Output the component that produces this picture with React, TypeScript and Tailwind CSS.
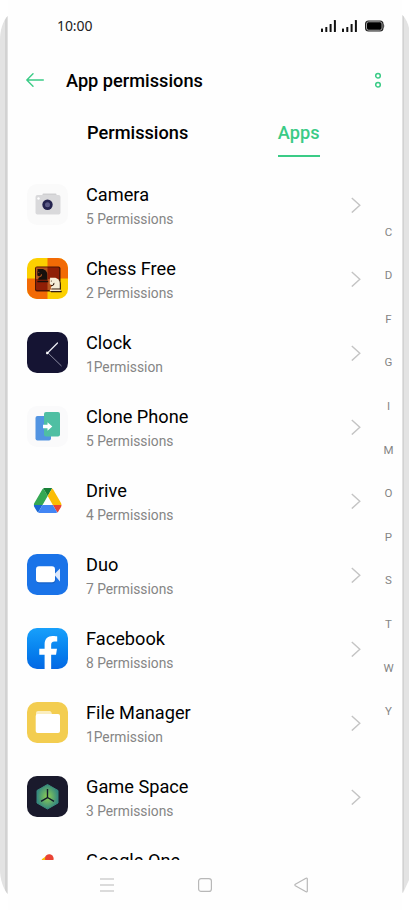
import React from "react";
import { FaChessKnight, FaFacebookF } from "react-icons/fa";

const CameraIcon = () => (
  <svg viewBox="0 0 41 41" className="size-full bg-[#fafafa]">
    <rect x="15.5" y="9.5" width="14" height="5" rx="1" fill="#cfcfd1" />
    <rect x="8.5" y="11" width="25" height="19.5" rx="2" fill="#d9d9db" />
    <circle cx="11.5" cy="14.5" r="1.2" fill="#fff" />
    <circle cx="20.5" cy="20.8" r="5.2" fill="#24234f" />
    <circle cx="20.5" cy="20.8" r="2.5" fill="#5b5a86" />
  </svg>
);

const ChessIcon = () => (
  <svg viewBox="0 0 41 41" className="size-full bg-[#fcd000]">
    <path d="M20.5 0H41v20.5H20.5zM0 20.5h20.5V41H0z" fill="#f26a05" />
    <rect x="8" y="8.5" width="25.5" height="25" rx="2" fill="#4a1506" />
    <rect x="9" y="9.5" width="23" height="22.5" rx="1" fill="#8f1f06" />
    <path d="M9 9.5h11.5v11.5H9z" fill="#b5571f" />
    <path d="M20.5 21H32v11H20.5z" fill="#b5571f" />
    <FaChessKnight x="8.5" y="10" size={14.5} fill="#17100c" />
    <FaChessKnight x="22" y="20" size={14.5} fill="#2b1408" />
    <FaChessKnight x="21" y="18.8" size={14.5} fill="#f6edd8" />
  </svg>
);

const ClockIcon = () => (
  <svg viewBox="0 0 41 41" className="size-full bg-[#151433]">
    <path d="M30.5 11 20 21.5" stroke="#e8e8f0" strokeWidth="1.3" strokeLinecap="round" />
    <path d="M19.5 19.5 34.5 34" stroke="#a9a9bd" strokeWidth="0.8" />
    <circle cx="20.3" cy="21" r="1.2" fill="#fff" />
  </svg>
);

const ClonePhoneIcon = () => (
  <svg viewBox="0 0 41 41" className="size-full bg-[#fafafb]">
    <rect x="8.5" y="10" width="15.5" height="24.5" rx="2" fill="#5294e2" />
    <rect x="17" y="6" width="16" height="24.5" rx="2" fill="#4fbfa3" />
    <path d="M16 18.8h4.5v-2.6l4.8 4.3-4.8 4.3v-2.6H16z" fill="#fff" />
  </svg>
);

const DriveIcon = () => (
  <svg viewBox="0 0 41 41" className="size-full">
    <svg x="6.7" y="8" width="28" height="25" viewBox="0 0 87.3 78">
      <path d="m6.6 66.85 3.85 6.65c.8 1.4 1.95 2.5 3.3 3.3l13.75-23.8H0c0 1.55.4 3.1 1.2 4.5z" fill="#1967d2" />
      <path d="M43.65 25 29.9 1.2c-1.35.8-2.5 1.9-3.3 3.3l-25.4 44A9.06 9.06 0 0 0 0 53h27.5z" fill="#34a853" />
      <path d="M73.55 76.8c1.35-.8 2.5-1.9 3.3-3.3l9.25-16c.8-1.4 1.2-2.95 1.2-4.5H59.8z" fill="#ea4335" />
      <path d="M43.65 25 57.4 1.2C56.05.4 54.5 0 52.9 0H34.4c-1.6 0-3.15.45-4.5 1.2z" fill="#188038" />
      <path d="M59.8 53H27.5L13.75 76.8c1.35.8 2.9 1.2 4.5 1.2h50.8c1.6 0 3.15-.45 4.5-1.2z" fill="#4285f4" />
      <path d="m73.4 26.5-12.7-22c-.8-1.4-1.95-2.5-3.3-3.3L43.65 25 59.8 53h27.45c0-1.55-.4-3.1-1.2-4.5z" fill="#fbbc04" />
    </svg>
  </svg>
);

const DuoIcon = () => (
  <svg viewBox="0 0 41 41" className="size-full bg-[#1a73e8]">
    <rect x="9.5" y="13.5" width="19" height="16" rx="3" fill="#1557b0" opacity="0.6" />
    <path d="m27 20.5 6-6v13z" fill="#dbe7fb" />
    <rect x="9" y="12.3" width="19" height="16" rx="3" fill="#fff" />
  </svg>
);

const FacebookIcon = () => (
  <svg viewBox="0 0 41 41" className="size-full bg-linear-to-b from-[#18a0fb] to-[#0568e4]">
    <FaFacebookF x="4.5" y="8" size={33.5} fill="#fff" />
  </svg>
);

const FileManagerIcon = () => (
  <svg viewBox="0 0 41 41" className="size-full bg-[#f3cd50]">
    <path d="M9 17v-6a2 2 0 0 1 2-2h11.5a2 2 0 0 1 2 1.5l1 4z" fill="#fbeebf" />
    <rect x="8.7" y="12" width="24.3" height="19" rx="2" fill="#fff" />
  </svg>
);

const GameSpaceIcon = () => (
  <svg viewBox="0 0 41 41" className="size-full bg-[#1a1a2c]">
    <defs>
      <radialGradient id="hex">
        <stop offset="0" stopColor="#8fd052" />
        <stop offset="1" stopColor="#36897f" />
      </radialGradient>
    </defs>
    <path d="m20.5 8.5 10.5 6v12.5l-10.5 6-10.5-6V14.500z" fill="url(#hex)" stroke="url(#hex)" strokeLinejoin="round" />
    <path d="M20.5 13v8.5L14 25.3M20.5 21.5l6.5 3.8" fill="none" stroke="#12182a" strokeWidth="1.4" />
  </svg>
);

const GoogleOneIcon = () => (
  <svg viewBox="0 0 41 41" className="size-full" fill="none" strokeWidth="8" strokeLinecap="round">
    <path d="M22 9v22" stroke="#4285f4" />
    <path d="m18.5 11.5 3.500-2.500" stroke="#fbbc04" />
    <circle cx="22.3" cy="8.5" r="4.3" fill="#ea4335" />
  </svg>
);

const apps = [
  { name: "Camera", permissions: "5 Permissions", Icon: CameraIcon },
  { name: "Chess Free", permissions: "2 Permissions", Icon: ChessIcon },
  { name: "Clock", permissions: "1Permission", Icon: ClockIcon },
  { name: "Clone Phone", permissions: "5 Permissions", Icon: ClonePhoneIcon },
  { name: "Drive", permissions: "4 Permissions", Icon: DriveIcon },
  { name: "Duo", permissions: "7 Permissions", Icon: DuoIcon },
  { name: "Facebook", permissions: "8 Permissions", Icon: FacebookIcon },
  { name: "File Manager", permissions: "1Permission", Icon: FileManagerIcon },
  { name: "Game Space", permissions: "3 Permissions", Icon: GameSpaceIcon },
  { name: "Google One", permissions: "", Icon: GoogleOneIcon },
];

const letters = ["C", "D", "F", "G", "I", "M", "O", "P", "S", "T", "W", "Y"];

const Signal = () => (
  <svg width="16" height="12" viewBox="0 0 16 12" fill="#111">
    <rect x="0" y="8.5" width="2" height="3.5" rx="0.5" />
    <rect x="4.3" y="7" width="2" height="5" rx="0.5" />
    <rect x="8.6" y="4" width="2" height="8" rx="0.5" />
    <rect x="12.9" y="0" width="2" height="12" rx="0.5" />
  </svg>
);

const App: React.FC = () => {
  return (
    <div className="flex h-[910px] w-[409px] overflow-hidden bg-white font-[Roboto,sans-serif] text-black">
      {/* Left edge of the phone */}
      <svg width="8" height="910" viewBox="0 0 8 910" className="shrink-0">
        <path d="M7.5 16C3 21 0 30 0 40v830c0 9 3 18 7.5 24z" fill="#e3e3e3" />
        <path d="M7.5 16 5 20v870l2.5 4z" fill="#d2d2d2" />
      </svg>
      <div className="flex min-w-0 flex-1 flex-col bg-[#fefefe]">
        {/* Status bar */}
        <div className="flex h-[52px] items-center justify-between pr-[17px] pl-[49px]">
          <span className="font-['Noto_Sans',sans-serif] text-sm tracking-[-0.1px] text-[#222]">10:00</span>
          <div className="flex items-center gap-[5px]">
            <Signal />
            <Signal />
            <svg width="20" height="12" viewBox="0 0 20 12" className="ml-0.5">
              <rect x="0" y="0.5" width="18.5" height="11" rx="3.5" fill="#222" />
              <rect x="1.5" y="1.8" width="15.5" height="8.4" rx="2.2" fill="#000" stroke="#ddd" strokeWidth="0.7" />
              <path d="M18.5 4v4c.9-.3.9-3.7 0-4z" fill="#111" />
            </svg>
          </div>
        </div>

        {/* Header */}
        <header className="flex h-14 items-center pr-5 pl-[18px]">
          <svg width="18" height="14" viewBox="0 0 18 14" fill="none" stroke="#3acb86" strokeWidth="1.4" strokeLinecap="round" strokeLinejoin="round">
            <path d="M17.3 7H.8M7 .8.8 7 7 13.2" />
          </svg>
          <h1 className="mt-px ml-[22px] flex-1 text-[18.2px] font-medium">App permissions</h1>
          <svg width="8" height="16" viewBox="0 0 8 16" fill="none" stroke="#3acb86" strokeWidth="1.5">
            <circle cx="4" cy="3.7" r="2.3" />
            <circle cx="4" cy="12.7" r="2.3" />
          </svg>
        </header>

        {/* Tabs */}
        <nav className="flex h-[59px] pt-[11px] pl-[79px] text-[18.2px] leading-7 font-medium">
          <span>Permissions</span>
          <span className="ml-[89.5px] h-[37.5px] border-b-2 border-[#3acb86] text-[#3acb86]">Apps</span>
        </nav>

        {/* App list */}
        <main className="flex h-[693px] overflow-hidden">
          <ul className="flex-1">
            {apps.map(({ name, permissions, Icon }) => (
              <li key={name} className="flex h-[74px] items-center pl-[19px]">
                <div className="size-[41px] overflow-hidden rounded-[10px]">
                  <Icon />
                </div>
                <div className="ml-[18px] flex-1 pt-1.5">
                  <p className="text-[18.2px] leading-6">{name}</p>
                  <p className="h-6 text-[13.8px] leading-[25px] text-[#858585]">{permissions}</p>
                </div>
                <svg width="10" height="16" viewBox="0 0 10 16" fill="none" stroke="#c4c4c4" strokeWidth="1.4" className="mt-px">
                  <path d="m.8 1 8 7.300-8 7.300" />
                </svg>
              </li>
            ))}
          </ul>
          <div className="mr-[1.5px] ml-[15.5px] flex w-6 flex-col pt-[43.500px]">
            {letters.map((letter) => (
              <span key={letter} className="flex h-[43.6px] shrink-0 items-center justify-center text-[11.5px] text-[#858585]">
                {letter}
              </span>
            ))}
          </div>
        </main>

        {/* Navigation bar */}
        <footer className="flex h-[50px] items-center pl-[92px]">
          <svg width="14" height="14" viewBox="0 0 14 14" stroke="#b8b8b8" strokeWidth="1.2">
            <path d="M0 1h14M0 7h14M0 13h14" />
          </svg>
          <svg width="14" height="14" viewBox="0 0 14 14" fill="none" stroke="#b8b8b8" strokeWidth="1.2" className="ml-[83.5px]">
            <rect x="0.6" y="0.6" width="12.8" height="12.8" rx="2.5" />
          </svg>
          <svg width="14" height="16" viewBox="0 0 14 16" fill="none" stroke="#b8b8b8" strokeWidth="1.2" strokeLinejoin="round" className="ml-[82.5px]">
            <path d="M12 1.2 1.3 7.3q-.9.7 0 1.4L12 14.8q1.3.4 1.3-.8V2q0-1.2-1.3-.8z" />
          </svg>
        </footer>
      </div>
      {/* Right edge of the phone */}
      <svg width="7" height="910" viewBox="0 0 7 910" className="shrink-0">
        <path d="M.5 15C4 19 6 23 7 28v852l-6 13H.5z" fill="#e3e3e3" />
        <path d="M.5 15 2 17v872l-1.5 4z" fill="#d2d2d2" />
      </svg>
    </div>
  );
};

export default App;
